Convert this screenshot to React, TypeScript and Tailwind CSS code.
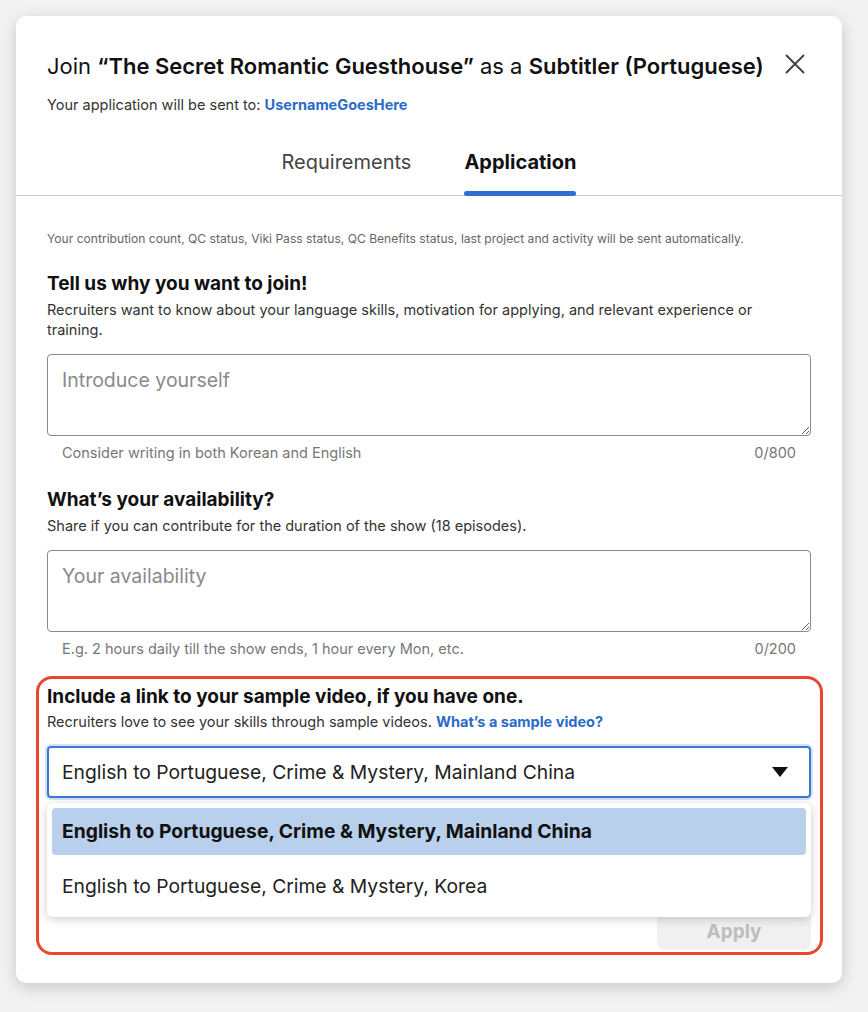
const FONT = { fontFamily: "Inter, 'Liberation Sans', sans-serif" };

function Field({
  title,
  desc,
  placeholder,
  hint,
  max,
}: {
  title: string;
  desc: string;
  placeholder: string;
  hint: string;
  max: number;
}) {
  return (
    <div className="flex flex-col">
      <h3 className="text-[19px] font-bold leading-[24px] text-[#111]">{title}</h3>
      <p className="mt-[4px] text-[14.5px] leading-[20px] text-[#333]">{desc}</p>
      <textarea
        placeholder={placeholder}
        className="mt-[14px] h-[82px] w-full resize-y rounded-[4px] border border-[#8a8a8a] px-[14px] py-[13px] text-[19.5px] leading-[24px] text-[#222] outline-none placeholder:text-[#8a8a8a]"
      />
      <div className="mt-[7px] flex justify-between px-[15px] text-[14.5px] leading-[20px] text-[#777]">
        <span>{hint}</span>
        <span>0/{max}</span>
      </div>
    </div>
  );
}

export default function App() {
  return (
    <div className="min-h-[1012px] w-full bg-[#f2f2f2] pt-4 text-[#222]" style={FONT}>
      <div className="ml-4 w-[826px] rounded-[10px] bg-white pb-[28px] shadow-[0_4px_16px_rgba(0,0,0,0.18)]">
        {/* header */}
        <div className="px-[31px] pt-[36px]">
          <div className="flex items-start justify-between">
            <h2 className="text-[22px] leading-[28px] text-[#111]">
              Join <strong className="font-semibold">“The Secret Romantic Guesthouse”</strong> as a{" "}
              <strong className="font-semibold">Subtitler (Portuguese)</strong>
            </h2>
            <button className="mt-[2px] mr-[6px]">
              <svg width="20" height="20" viewBox="0 0 20 20">
                <path d="M1.5 1.5l17 17M18.5 1.5l-17 17" stroke="#444" strokeWidth="2" strokeLinecap="round" />
              </svg>
            </button>
          </div>
          <p className="mt-[15px] text-[14.5px] leading-[20px] text-[#333]">
            Your application will be sent to:{" "}
            <a className="font-bold text-[#2a6bc9]">UsernameGoesHere</a>
          </p>
        </div>

        {/* tabs */}
        <div className="mt-[33px] flex justify-center gap-[53px] border-b border-[#cfcfcf]">
          <button className="pb-[19px] text-[20px] leading-[28px] text-[#444]">Requirements</button>
          <button className="relative pb-[19px] text-[20px] font-bold leading-[28px] text-[#111]">
            Application
            <span className="absolute bottom-[-1px] left-0 right-0 h-[5px] rounded-full bg-[#2f6fd0]" />
          </button>
        </div>

        <div className="px-[31px]">
          <p className="mt-[35px] text-[12.1px] leading-[16px] text-[#666]">
            Your contribution count, QC status, Viki Pass status, QC Benefits status, last project and activity will be sent automatically.
          </p>

          <div className="mt-[25px]">
            <Field
              title="Tell us why you want to join!"
              desc="Recruiters want to know about your language skills, motivation for applying, and relevant experience or training."
              placeholder="Introduce yourself"
              hint="Consider writing in both Korean and English"
              max={800}
            />
          </div>

          <div className="mt-[25px]">
            <Field
              title="What’s your availability?"
              desc="Share if you can contribute for the duration of the show (18 episodes)."
              placeholder="Your availability"
              hint="E.g. 2 hours daily till the show ends, 1 hour every Mon, etc."
              max={200}
            />
          </div>
        </div>

        {/* highlighted section */}
        <div className="ml-[20px] mr-[19px] mt-[17px] rounded-[16px] border-[3px] border-[#e8462f] pl-[8px] pr-[9px] pt-[6px] pb-[2px]">
          <h3 className="text-[19px] font-bold leading-[24px] text-[#111]">
            Include a link to your sample video, if you have one.
          </h3>
          <p className="mt-[3px] text-[14.5px] leading-[20px] text-[#333]">
            Recruiters love to see your skills through sample videos.{" "}
            <a className="font-bold text-[#2a6bc9]">What’s a sample video?</a>
          </p>

          <div className="relative mt-[14px]">
            <div className="flex h-[52px] items-center justify-between rounded-[4px] border-2 border-[#3a78d4] px-[13px] shadow-[0_0_0_2px_rgba(58,120,212,0.22)]">
              <span className="text-[19.3px] text-[#222]">English to Portuguese, Crime &amp; Mystery, Mainland China</span>
              <svg width="16" height="10" viewBox="0 0 16 10" className="mr-[8px]">
                <path d="M0 0h16L8 10z" fill="#111" />
              </svg>
            </div>

            <div className="absolute left-0 right-0 top-[57px] z-10 rounded-[6px] bg-white px-[5px] pt-[5px] shadow-[0_2px_10px_rgba(0,0,0,0.2)]">
              <div className="flex h-[47px] items-center rounded-[4px] bg-[#b9d0ec] px-[10px] text-[19.3px] font-bold text-[#111]">
                English to Portuguese, Crime &amp; Mystery, Mainland China
              </div>
              <div className="flex h-[62px] items-center px-[10px] text-[19.3px] text-[#222]">
                English to Portuguese, Crime &amp; Mystery, Korea
              </div>
            </div>

            <div className="mt-[114px] flex justify-end">
              <button className="h-[38px] w-[154px] rounded-b-[8px] bg-[#f0f0f0] pt-[2px] text-[19px] font-bold text-[#bdbdbd]">
                Apply
              </button>
            </div>
          </div>
        </div>
      </div>
    </div>
  );
}
